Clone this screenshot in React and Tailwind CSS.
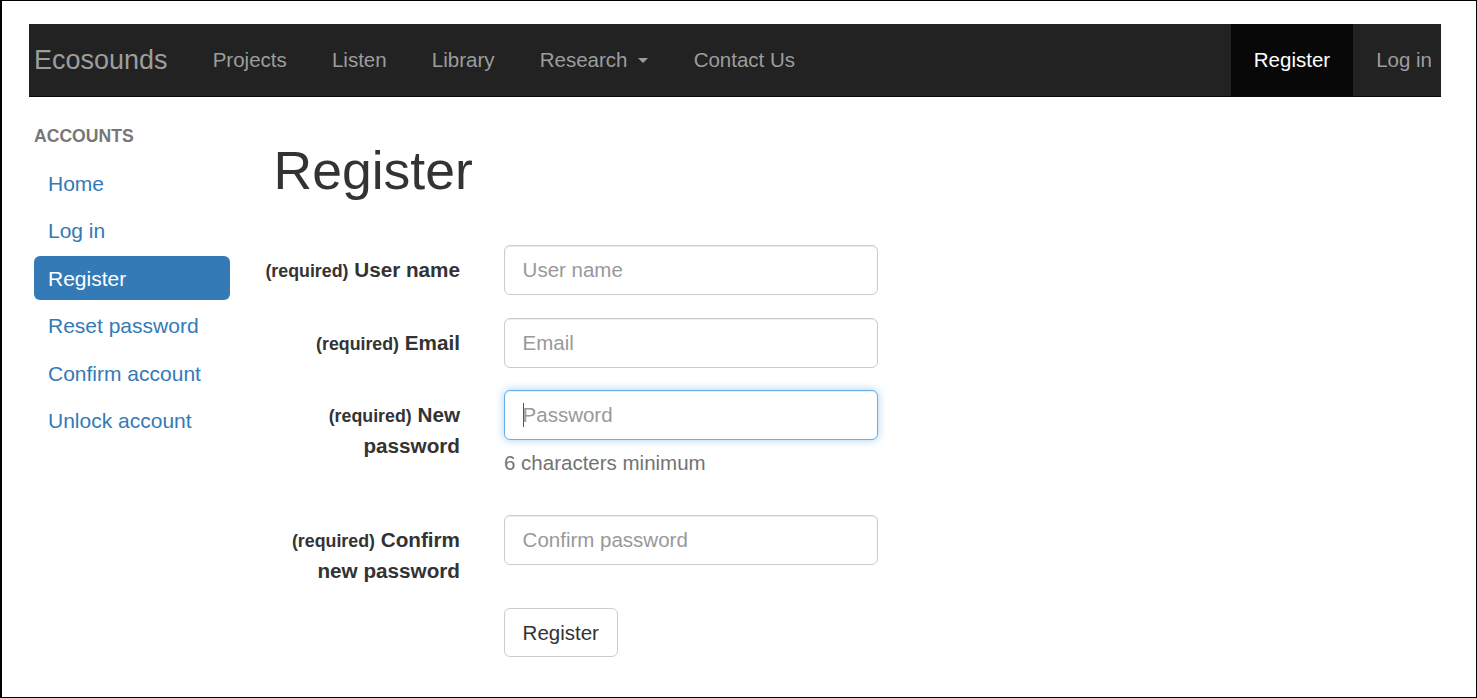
import React from "react";

const font = "font-['Liberation_Sans',Arial,Helvetica,sans-serif]";

function NavLink({ children, caret }) {
  return (
    <a className="h-full flex items-center px-[22.6px] text-[20.5px] text-[#9d9d9d]">
      {children}
      {caret && (
        <span className="ml-[11px] inline-block w-0 h-0 border-t-[5px] border-t-[#9d9d9d] border-x-[5px] border-x-transparent" />
      )}
    </a>
  );
}

function SideItem({ children, active }) {
  return (
    <a
      className={
        active
          ? "h-[44px] flex items-center pl-[14px] rounded-[6px] bg-[#337ab7] text-white text-[21px]"
          : "h-[44px] flex items-center pl-[14px] rounded-[6px] text-[#337ab7] text-[21px]"
      }
    >
      {children}
    </a>
  );
}

function Label({ children }) {
  return (
    <label className="w-[200px] shrink-0 text-right pt-[10px] font-bold text-[20.7px] leading-[30px] text-[#333]">
      <span className="text-[17.8px]">(required)</span> {children}
    </label>
  );
}

const inputCls =
  "w-full h-[50px] border border-[#ccc] rounded-[6px] px-[17.6px] text-[20.5px] text-[#555] placeholder:text-[#999] bg-white outline-none shadow-[inset_0_1px_1px_rgba(0,0,0,0.075)]";

export default function App() {
  return (
    <div className={`${font} w-[1477px] h-[698px] bg-white border-t border-r border-b border-l-2 border-black overflow-hidden text-[#333]`}>
      {/* Navbar */}
      <nav className="ml-[27px] mt-[23px] w-[1412px] h-[73px] bg-[#222] border-b border-[#080808] flex items-stretch">
        <a className="h-full flex items-center pl-[5px] pr-[22.5px] text-[27px] text-[#9d9d9d]">Ecosounds</a>
        <NavLink>Projects</NavLink>
        <NavLink>Listen</NavLink>
        <NavLink>Library</NavLink>
        <NavLink caret>Research</NavLink>
        <NavLink>Contact Us</NavLink>
        <div className="ml-auto flex items-stretch">
          <a className="h-full flex items-center px-[23px] bg-[#080808] text-white text-[20.5px]">Register</a>
          <a className="h-full flex items-center pl-[23px] pr-[9px] text-[#9d9d9d] text-[20.5px]">Log in</a>
        </div>
      </nav>

      {/* Body */}
      <div className="flex ml-[32px]">
        {/* Sidebar */}
        <aside className="w-[196px] shrink-0 pt-[27px]">
          <div className="text-[17.6px] leading-[25px] font-bold text-[#777]">ACCOUNTS</div>
          <div className="mt-[12.7px] flex flex-col gap-[3.4px]">
            <SideItem>Home</SideItem>
            <SideItem>Log in</SideItem>
            <SideItem active>Register</SideItem>
            <SideItem>Reset password</SideItem>
            <SideItem>Confirm account</SideItem>
            <SideItem>Unlock account</SideItem>
          </div>
        </aside>

        {/* Main */}
        <main className="ml-[30px]">
          <h1 className="mt-[45px] pl-[13.5px] text-[53.5px] leading-[1.1] font-normal text-[#333]">Register</h1>
          <form className="mt-[44.5px]">
            <div className="flex items-start mb-[22.5px]">
              <Label>User name</Label>
              <div className="ml-[44px] w-[374px]">
                <input className={inputCls} placeholder="User name" />
              </div>
            </div>
            <div className="flex items-start mb-[22.5px]">
              <Label>Email</Label>
              <div className="ml-[44px] w-[374px]">
                <input className={inputCls} placeholder="Email" />
              </div>
            </div>
            <div className="flex items-start mb-[22.5px]">
              <Label>New password</Label>
              <div className="ml-[44px] w-[374px]">
                <div className="relative">
                  <input
                    type="password"
                    className="w-full h-[50px] border border-[#66afe9] rounded-[6px] px-[17.6px] text-[20.5px] text-[#555] placeholder:text-[#999] bg-white outline-none shadow-[inset_0_1px_1px_rgba(0,0,0,0.075),0_0_8px_rgba(102,175,233,0.6)]"
                    placeholder="Password"
                  />
                  <span className="absolute left-[18.5px] top-[13px] w-px h-[24px] bg-[#555]" />
                </div>
                <div className="mt-[8px] mb-[14.8px] text-[20.5px] leading-[29.3px] text-[#737373]">6 characters minimum</div>
              </div>
            </div>
            <div className="flex items-start mb-[22.5px]">
              <Label>Confirm new password</Label>
              <div className="ml-[44px] w-[374px]">
                <input type="password" className={inputCls} placeholder="Confirm password" />
              </div>
            </div>
            <div className="flex items-start">
              <div className="w-[200px] shrink-0" />
              <div className="ml-[44px]">
                <button
                  type="button"
                  className="border border-[#ccc] rounded-[6px] px-[17.6px] py-[8.8px] text-[20.5px] leading-[29.3px] text-[#333] bg-white"
                >
                  Register
                </button>
              </div>
            </div>
          </form>
        </main>
      </div>
    </div>
  );
}
